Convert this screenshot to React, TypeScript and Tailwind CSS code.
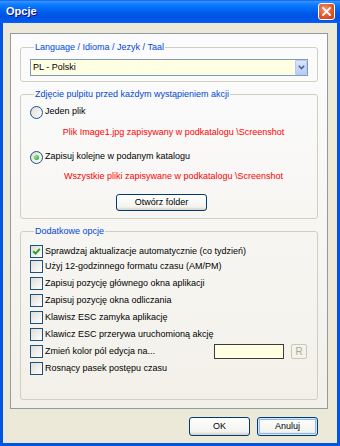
import React from 'react';

const font = "font-['Liberation_Sans',Arial,sans-serif]";

const CheckBox: React.FC<{ checked?: boolean }> = ({ checked }) => (
  <span className="flex h-[13px] w-[13px] shrink-0 items-center justify-center border border-[#1C5180] bg-[linear-gradient(135deg,#DCDCD7,#FFFFFF)]">
    {checked && (
      <svg width="9" height="9" viewBox="0 0 9 9">
        <path d="M1.2 4.2 L3.5 6.6 L7.8 1.8" fill="none" stroke="#21A121" strokeWidth="1.9" />
      </svg>
    )}
  </span>
);

const Radio: React.FC<{ checked?: boolean }> = ({ checked }) => (
  <span className="flex h-[13px] w-[13px] shrink-0 items-center justify-center rounded-full border border-[#1C5180] bg-[linear-gradient(135deg,#DCDCD7,#FFFFFF)]">
    {checked && <span className="h-[5px] w-[5px] rounded-full bg-[radial-gradient(circle_at_35%_35%,#8CE88A,#21A121)]" />}
  </span>
);

const Option: React.FC<{ label: string; checked?: boolean; className?: string; children?: React.ReactNode }> = ({ label, checked, className = '', children }) => (
  <div className={`flex h-[15px] items-center ${className}`}>
    <CheckBox checked={checked} />
    <span className="ml-[2px] whitespace-nowrap">{label}</span>
    {children}
  </div>
);

const XpButton: React.FC<{ label: string; isDefault?: boolean; className?: string }> = ({ label, isDefault, className = '' }) => (
  <button
    className={`flex items-center justify-center rounded-[3px] border border-[#003C74] bg-[linear-gradient(180deg,#FFFFFF,#F3F3EF_80%,#D6D0C5)] text-black ${
      isDefault ? 'shadow-[inset_0_0_0_1px_#CEE7FF,inset_0_0_0_2px_#98B8EA]' : ''
    } ${className}`}
  >
    {label}
  </button>
);

const legendCls = 'ml-[4px] px-[1px] text-[#0046D5] leading-[12px]';
const fieldsetCls = 'rounded-[3px] border border-[#D0D0BF]';

export default function App() {
  return (
    <div className={`flex h-[446px] w-[340px] flex-col bg-[#0055E5] text-[9px] text-black ${font}`}>
      {/* Title bar */}
      <div className="flex h-[23px] shrink-0 items-center justify-between bg-[linear-gradient(180deg,#0058EE_0%,#3A93FF_6%,#288EFF_10%,#127DFF_18%,#036FFC_34%,#0262EE_48%,#0057E5_60%,#0054E3_76%,#0055EB_88%,#005BF5_95%,#026AFE_100%)] pl-[6px] pr-[5px]">
        <span className="text-[11px] font-bold text-white [text-shadow:1px_1px_#0F1089]">Opcje</span>
        <span className="flex h-[17px] w-[17px] items-center justify-center rounded-[3px] border border-white bg-[radial-gradient(circle_at_40%_35%,#F09878,#E2582B_55%,#C23A12)]">
          <svg width="9" height="9" viewBox="0 0 9 9">
            <path d="M1 1 L8 8 M8 1 L1 8" stroke="white" strokeWidth="1.8" strokeLinecap="square" />
          </svg>
        </span>
      </div>

      {/* Body */}
      <div className="mx-[3px] flex h-[420px] flex-col bg-[#ECE9D8]">
        <div className="ml-[7px] mt-[10px] flex h-[376px] w-[318px] flex-col border border-[#919B9C] bg-[linear-gradient(180deg,#FCFCFE,#F2F0E8)] px-[9px] pt-[7px]">
          {/* Language */}
          <fieldset className={`${fieldsetCls} px-[9px] pb-[5px]`}>
            <legend className={legendCls}>Language / Idioma / Jezyk / Taal</legend>
            <div className="mt-[6px] flex h-[17px] items-center border border-[#7F9DB9] bg-[#FFFFE1]">
              <span className="flex-1 pl-[2px]">PL - Polski</span>
              <span className="flex h-[15px] w-[12px] items-center justify-center rounded-[1px] border border-[#B6C9F3] bg-[linear-gradient(180deg,#D9E5FD,#B8CCF8)]">
                <svg width="7" height="5" viewBox="0 0 7 5">
                  <path d="M0.8 0.8 L3.5 3.6 L6.2 0.8" fill="none" stroke="#4D6185" strokeWidth="1.5" />
                </svg>
              </span>
            </div>
          </fieldset>

          {/* Screenshot */}
          <fieldset className={`${fieldsetCls} mt-[6px] pb-[7px] pl-[9px]`}>
            <legend className={legendCls}>Zdjęcie pulpitu przed każdym wystąpieniem akcji</legend>
            <div className="mt-[4px] flex h-[16px] items-center">
              <Radio />
              <span className="ml-[2px]">Jeden plik</span>
            </div>
            <div className="mt-[6px] flex h-[14px] items-center justify-center text-[#FF0000]">Plik Image1.jpg zapisywany w podkatalogu \Screenshot</div>
            <div className="mt-[9px] flex h-[16px] items-center">
              <Radio checked />
              <span className="ml-[2px]">Zapisuj kolejne w podanym katalogu</span>
            </div>
            <div className="mt-[5px] flex h-[14px] items-center justify-center text-[#FF0000]">Wszystkie pliki zapisywane w podkatalogu \Screenshot</div>
            <XpButton label="Otwórz folder" className="ml-[86px] mt-[10px] h-[17px] w-[91px]" />
          </fieldset>

          {/* Additional options */}
          <fieldset className={`${fieldsetCls} mt-[6px] pb-[23px] pl-[9px] pr-[10px]`}>
            <legend className={legendCls}>Dodatkowe opcje</legend>
            <Option label="Sprawdzaj aktualizacje automatycznie (co tydzień)" checked className="mt-[7px]" />
            <Option label="Użyj 12-godzinnego formatu czasu (AM/PM)" />
            <Option label="Zapisuj pozycję głównego okna aplikacji" className="mt-[2px]" />
            <Option label="Zapisuj pozycję okna odliczania" className="mt-[2px]" />
            <Option label="Klawisz ESC zamyka aplikację" className="mt-[2px]" />
            <Option label="Klawicz ESC przerywa uruchomioną akcję" className="mt-[2px]" />
            <Option label="Zmień kolor pól edycja na..." className="mt-[2px]">
              <span className="ml-auto h-[15px] w-[70px] border border-[#3C3C3C] bg-[#FFFFE1]" />
              <span className="ml-[7px] flex h-[15px] w-[16px] items-center justify-center rounded-[2px] border border-[#C9C7BA] bg-[#F5F4EA] text-[10px] text-[#ACA899]">R</span>
            </Option>
            <Option label="Rosnący pasek postępu czasu" className="mt-[2px]" />
          </fieldset>
        </div>

        {/* Dialog buttons */}
        <div className="mt-[8px] flex justify-end gap-[7px] pr-[19px]">
          <XpButton label="OK" className="h-[19px] w-[61px]" />
          <XpButton label="Anuluj" isDefault className="h-[19px] w-[61px]" />
        </div>
      </div>
    </div>
  );
}
